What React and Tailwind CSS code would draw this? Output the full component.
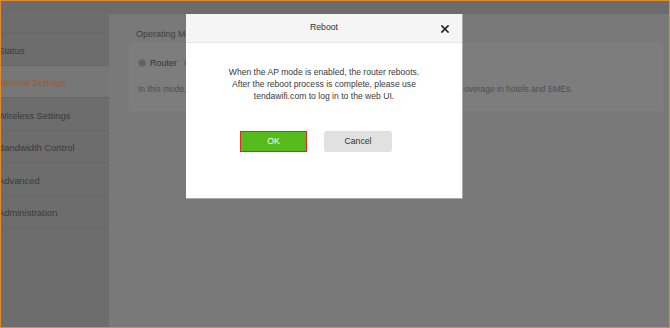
import React from "react";

const navItems = [
  { label: "Status" },
  { label: "Internet Settings", active: true },
  { label: "Wireless Settings" },
  { label: "Bandwidth Control" },
  { label: "Advanced" },
  { label: "Administration" },
];

export default function App() {
  return (
    <div
      className="relative w-[670px] h-[328px] overflow-hidden border border-[#de8a2e] bg-[#797979] flex flex-col"
      style={{ fontFamily: '"Liberation Sans", Arial, sans-serif' }}
    >
      {/* top strip */}
      <div className="h-[13px] shrink-0 bg-[#6c6c6c]" />

      <div className="flex flex-1 min-h-0">
        {/* sidebar */}
        <div className="w-[108px] shrink-0 bg-[#6d6d6d] flex flex-col">
          <div className="h-[19px] border-b border-[#676767]" />
          {navItems.map((it) => (
            <div
              key={it.label}
              className={`h-[32.5px] pt-[4px] flex items-center border-b border-[#676767] text-[9.4px] whitespace-nowrap overflow-hidden ${
                it.active ? "bg-[#777777] text-[#ad531d]" : "text-[#3a3a3a]"
              }`}
            >
              <span className="-ml-[3px]">{it.label}</span>
            </div>
          ))}
        </div>

        {/* main */}
        <div className="flex-1 bg-[#797979] rounded-tl-[4px] pl-[20px] pr-[6px] pt-[14px]">
          <div className="text-[9px] text-[#3f3f3f] pl-[7px] leading-[12px]">Operating Mode</div>
          <div className="mt-[3px] h-[68px] rounded-[3px] bg-[#7d7d7d] border border-[#818181] pl-[8px] pt-[13px]">
            <div className="flex items-center text-[9px] font-normal text-[#353535] leading-[12px]">
              <span className="w-[8px] h-[8px] rounded-full bg-[#626262] border border-[#6a6a6a]" />
              <span className="ml-[4px]">Router</span>
              <span className="ml-[7px] w-[8px] h-[8px] rounded-full bg-[#626262] border border-[#6a6a6a]" />
              <span className="ml-[4px]">AP</span>
            </div>
            <div className="mt-[14px] text-[8.5px] text-[#4e4e4e] whitespace-nowrap leading-[12px]">
              In this mode, the router works as a wireless access point (AP) to provide stable Wi-Fi coverage in hotels and SMEs.
            </div>
          </div>
        </div>
      </div>

      {/* modal */}
      <div className="absolute left-[185px] top-[13px] w-[277px] h-[185px] bg-white border-r border-b border-[#a9a9a9] flex flex-col">
        <div className="relative h-[29px] shrink-0 bg-[#f5f5f5] border-b border-[#e6e6e6] flex items-center justify-center">
          <span className="text-[8.7px] text-[#333]">Reboot</span>
          <svg
            className="absolute right-[13px] top-[11px]"
            width="8"
            height="8"
            viewBox="0 0 8 8"
          >
            <path d="M1 1 L7 7 M7 1 L1 7" stroke="#222" strokeWidth="1.7" strokeLinecap="square" />
          </svg>
        </div>
        <div className="pt-[23px] text-center text-[8.6px] leading-[12px] text-[#3a3a3a]">
          <div>When the AP mode is enabled, the router reboots.</div>
          <div>After the reboot process is complete, please use</div>
          <div>tendawifi.com to log in to the web UI.</div>
        </div>
        <div className="mt-[29px] flex pl-[54px] gap-[17px]">
          <button className="w-[67px] h-[21px] bg-[#55bb1b] border border-[#e02a2a] text-white text-[8.7px]">
            OK
          </button>
          <button className="w-[68px] h-[21px] bg-[#e1e1e1] rounded-[3px] text-[#333] text-[8.7px]">
            Cancel
          </button>
        </div>
      </div>
    </div>
  );
}
